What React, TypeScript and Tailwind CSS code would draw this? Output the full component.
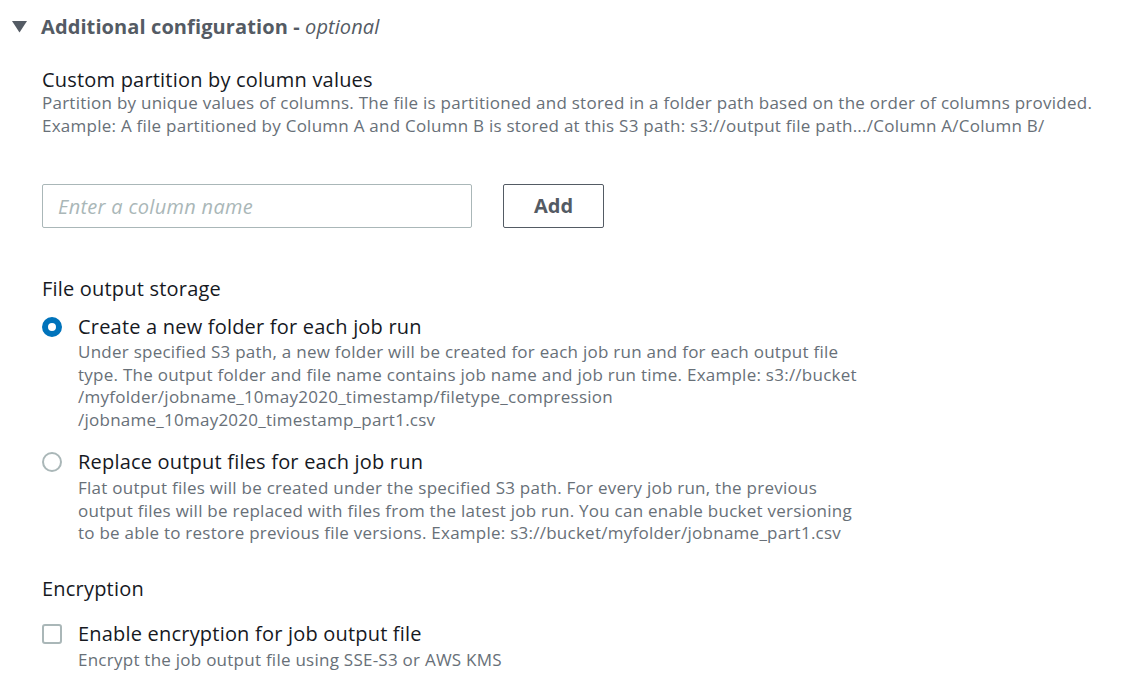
import React, { useState } from 'react';

const font = { fontFamily: '"Open Sans", "Noto Sans", Arial, sans-serif' };

const Desc: React.FC<{ lines: string[]; className?: string }> = ({ lines, className = '' }) => (
  <div className={`text-[17px] leading-[22.5px] tracking-[0.25px] text-[#687078] ${className}`}>
    {lines.map((l) => (
      <div key={l} className="whitespace-nowrap">{l}</div>
    ))}
  </div>
);

const Radio: React.FC<{ checked: boolean; onClick: () => void }> = ({ checked, onClick }) => (
  <button
    type="button"
    onClick={onClick}
    className={`mt-[3px] h-5 w-5 shrink-0 rounded-full bg-white ${
      checked ? 'border-[6px] border-[#0073bb]' : 'border-2 border-[#aab7b8]'
    }`}
  />
);

const label = 'text-[20px] tracking-[0.2px] text-[#16191f]';

export default function App() {
  const [mode, setMode] = useState<'new' | 'replace'>('new');
  const [encrypt, setEncrypt] = useState(false);
  const [column, setColumn] = useState('');

  return (
    <div className="min-h-screen bg-white pl-3 pt-[13px]" style={font}>
      <div className="flex items-center gap-[14px]">
        <svg width="15" height="12" viewBox="0 0 15 12" className="shrink-0">
          <path d="M0 0 H15 L7.5 11.5 Z" fill="#545b64" />
        </svg>
        <h2 className="text-[20px] leading-[28px] font-bold tracking-[0.1px] text-[#545b64]">
          Additional configuration - <span className="font-normal italic">optional</span>
        </h2>
      </div>

      <div className="pl-[30px]">
        <div className={`mt-[27px] leading-[24px] ${label}`}>Custom partition by column values</div>
        <Desc
          lines={[
            'Partition by unique values of columns. The file is partitioned and stored in a folder path based on the order of columns provided.',
            'Example: A file partitioned by Column A and Column B is stored at this S3 path: s3://output file path.../Column A/Column B/',
          ]}
        />

        <div className="mt-[47px] flex items-center gap-[31px]">
          <input
            value={column}
            onChange={(e) => setColumn(e.target.value)}
            placeholder="Enter a column name"
            className="h-[44px] w-[430px] rounded-[2px] border border-[#aab7b8] px-[15px] text-[20px] tracking-[0.3px] text-[#16191f] outline-none placeholder:italic placeholder:text-[#aab7b8]"
          />
          <button
            type="button"
            className="h-[44px] w-[101px] rounded-[2px] border border-[#545b64] bg-white text-[20px] font-bold text-[#545b64]"
          >
            Add
          </button>
        </div>

        <div className={`mt-[49px] leading-[24px] ${label}`}>File output storage</div>

        <div className="mt-[13px] flex gap-4">
          <Radio checked={mode === 'new'} onClick={() => setMode('new')} />
          <div>
            <div className={`leading-[26px] ${label}`}>Create a new folder for each job run</div>
            <Desc
              className="mt-[1px]"
              lines={[
                'Under specified S3 path, a new folder will be created for each job run and for each output file',
                'type. The output folder and file name contains job name and job run time. Example: s3://bucket',
                '/myfolder/jobname_10may2020_timestamp/filetype_compression',
                '/jobname_10may2020_timestamp_part1.csv',
              ]}
            />
          </div>
        </div>

        <div className="mt-[18px] flex gap-4">
          <Radio checked={mode === 'replace'} onClick={() => setMode('replace')} />
          <div>
            <div className={`leading-[26px] ${label}`}>Replace output files for each job run</div>
            <Desc
              className="mt-[2px]"
              lines={[
                'Flat output files will be created under the specified S3 path. For every job run, the previous',
                'output files will be replaced with files from the latest job run. You can enable bucket versioning',
                'to be able to restore previous file versions. Example: s3://bucket/myfolder/jobname_part1.csv',
              ]}
            />
          </div>
        </div>

        <div className={`mt-[32px] leading-[24px] ${label}`}>Encryption</div>

        <div className="mt-[20px] flex gap-4">
          <button
            type="button"
            onClick={() => setEncrypt(!encrypt)}
            className={`mt-[3px] h-5 w-5 shrink-0 rounded-[3px] border-2 ${
              encrypt ? 'border-[#0073bb] bg-[#0073bb]' : 'border-[#aab7b8] bg-white'
            }`}
          />
          <div>
            <div className={`leading-[26px] ${label}`}>Enable encryption for job output file</div>
            <Desc className="mt-[2px]" lines={['Encrypt the job output file using SSE-S3 or AWS KMS']} />
          </div>
        </div>
      </div>
    </div>
  );
}
